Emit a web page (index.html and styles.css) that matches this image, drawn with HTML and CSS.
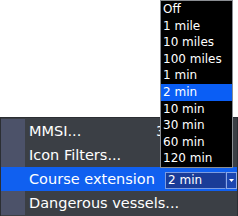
FILE: index.html
```html
<!DOCTYPE html>
<html>
<head>
<meta charset="utf-8">
<link rel="stylesheet" href="styles.css">
</head>
<body>
<div class="screen">
  <div class="menu">
    <div class="row">
      <div class="strip"></div>
      <div class="label">MMSI...</div>
      <div class="value">3</div>
    </div>
    <div class="row">
      <div class="strip"></div>
      <div class="label">Icon Filters...</div>
    </div>
    <div class="row selected">
      <div class="strip"></div>
      <div class="label">Course extension</div>
      <div class="combo">
        <div class="combo-text">2 min</div>
        <div class="combo-btn">
          <svg width="5" height="3" viewBox="0 0 5 3"><path d="M0 0H5L2.5 3Z" fill="#fff"/></svg>
        </div>
      </div>
    </div>
    <div class="row">
      <div class="strip"></div>
      <div class="label">Dangerous vessels...</div>
    </div>
  </div>
  <ul class="list">
    <li>Off</li>
    <li>1 mile</li>
    <li>10 miles</li>
    <li>100 miles</li>
    <li>1 min</li>
    <li class="active">2 min</li>
    <li>10 min</li>
    <li>30 min</li>
    <li>60 min</li>
    <li>120 min</li>
  </ul>
</div>
</body>
</html>
```

FILE: styles.css
```css
html, body {
  margin: 0;
  padding: 0;
  background: #ffffff;
}
.screen {
  position: relative;
  width: 238px;
  height: 216px;
  overflow: hidden;
  font-family: "DejaVu Sans", sans-serif;
  color: #ffffff;
}
.menu {
  margin-top: 117px;
  padding-top: 1px;
  background: #3b3f45;
  border-top: 1px solid #2b2e33;
  border-left: 1px solid #2b2e33;
  border-right: 1px solid #2b2e33;
  height: 99px;
  box-sizing: border-box;
  display: flex;
  flex-direction: column;
}
.row {
  display: flex;
  align-items: center;
  height: 24px;
  flex: none;
  font-size: 14.5px;
}
.strip {
  width: 24px;
  align-self: stretch;
  background: #4c5269;
  flex: none;
}
.label {
  width: 132px;
  padding-left: 4px;
  white-space: nowrap;
  flex: none;
}
.value {
  width: 4px;
  margin-left: -5px;
  overflow: hidden;
  white-space: nowrap;
}
.row.selected {
  background: #1060f0;
}
.row.selected .strip {
  background: transparent;
}
.combo {
  display: flex;
  height: 17px;
  width: 72px;
  margin-left: 4px;
  margin-top: 2px;
}
.combo-text {
  flex: 1;
  background: #1a3c98;
  border: 1px solid #7c9ce0;
  border-right-color: #2a4aa8;
  box-sizing: border-box;
  font-size: 12px;
  line-height: 15px;
  padding-left: 2px;
}
.combo-btn {
  width: 11px;
  background: #1c46b0;
  border: 1px solid #8aa8e8;
  box-sizing: border-box;
  display: flex;
  align-items: center;
  justify-content: center;
}
.list {
  position: absolute;
  left: 160px;
  top: 0;
  width: 73px;
  margin: 0;
  padding: 0;
  list-style: none;
  background: #000000;
  border: 1px solid #8a8d92;
  box-sizing: border-box;
  font-size: 12px;
}
.list li {
  height: 16.6px;
  line-height: 16.6px;
  padding-left: 2px;
  white-space: nowrap;
}
.list li.active {
  background: #0a5ef5;
}
```
